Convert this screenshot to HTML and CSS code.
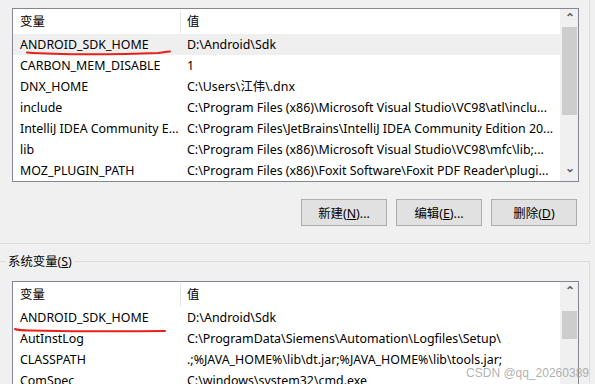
FILE: index.html
```html
<!DOCTYPE html>
<html lang="zh-CN">
<head>
    <meta charset="UTF-8">
    <title>环境变量</title>
    <link rel="stylesheet" href="styles.css">
</head>
<body>

    <!-- 用户变量 -->
    <div class="group group-user">
        <div class="listbox">
            <div class="list-body">
                <div class="list-head">
                    <div class="col-name">变量</div>
                    <div class="col-value">值</div>
                </div>
                <div class="row selected"><div class="col-name">ANDROID_SDK_HOME</div><div class="col-value">D:\Android\Sdk</div></div>
                <div class="row"><div class="col-name">CARBON_MEM_DISABLE</div><div class="col-value">1</div></div>
                <div class="row"><div class="col-name">DNX_HOME</div><div class="col-value">C:\Users\江伟\.dnx</div></div>
                <div class="row"><div class="col-name">include</div><div class="col-value">C:\Program Files (x86)\Microsoft Visual Studio\VC98\atl\inclu...</div></div>
                <div class="row"><div class="col-name">IntelliJ IDEA Community E...</div><div class="col-value">C:\Program Files\JetBrains\IntelliJ IDEA Community Edition 20...</div></div>
                <div class="row"><div class="col-name">lib</div><div class="col-value">C:\Program Files (x86)\Microsoft Visual Studio\VC98\mfc\lib;...</div></div>
                <div class="row"><div class="col-name">MOZ_PLUGIN_PATH</div><div class="col-value">C:\Program Files (x86)\Foxit Software\Foxit PDF Reader\plugi...</div></div>
            </div>
            <div class="scrollbar">
                <div class="arrow">&#8963;</div>
                <div class="track"><div class="thumb thumb-user"></div></div>
                <div class="arrow arrow-down">&#8964;</div>
            </div>
        </div>

        <div class="buttons">
            <button>新建(<u>N</u>)...</button>
            <button>编辑(<u>E</u>)...</button>
            <button>删除(<u>D</u>)</button>
        </div>
    </div>

    <!-- 系统变量 -->
    <div class="group group-system">
        <span class="group-label">系统变量(<u>S</u>)</span>
        <div class="listbox">
            <div class="list-body">
                <div class="list-head">
                    <div class="col-name">变量</div>
                    <div class="col-value">值</div>
                </div>
                <div class="row"><div class="col-name">ANDROID_SDK_HOME</div><div class="col-value">D:\Android\Sdk</div></div>
                <div class="row"><div class="col-name">AutInstLog</div><div class="col-value">C:\ProgramData\Siemens\Automation\Logfiles\Setup\</div></div>
                <div class="row"><div class="col-name">CLASSPATH</div><div class="col-value">.;%JAVA_HOME%\lib\dt.jar;%JAVA_HOME%\lib\tools.jar;</div></div>
                <div class="row"><div class="col-name">ComSpec</div><div class="col-value">C:\windows\system32\cmd.exe</div></div>
            </div>
            <div class="scrollbar">
                <div class="arrow">&#8963;</div>
                <div class="track"><div class="thumb thumb-system"></div></div>
            </div>
        </div>
    </div>

    <!-- 红色标记 -->
    <svg class="marks" width="595" height="384" viewBox="0 0 595 384">
        <path d="M27 52.5 C60 55, 120 54.5, 158 53 C163 52.5, 166 51.5, 170 51.5" />
        <path d="M15 329 C18 330.5, 22 330.5, 30 330.5 C80 331.5, 130 331.5, 165 331" />
    </svg>

    <div class="watermark">CSDN @qq_20260389</div>

</body>
</html>
```

FILE: styles.css
```css
body {
    margin: 0;
    width: 595px;
    height: 384px;
    overflow: hidden;
    position: relative;
    background: #f0f0f0;
    font-family: "Noto Sans", "Noto Sans CJK SC", sans-serif;
    font-size: 12.4px;
    color: #000;
}

.group {
    width: 590px;
    box-sizing: border-box;
    border-right: 1px solid #dcdcdc;
}

.group-user {
    padding: 8px 12px 17px 12px;
    border-bottom: 1px solid #dcdcdc;
}

.group-system {
    margin-top: 17px;
    border-top: 1px solid #dcdcdc;
    padding: 19px 12px 0 12px;
    position: relative;
    height: 121px;
}

.group-label {
    position: absolute;
    top: -9px;
    left: 6px;
    padding: 0 2px;
    background: #f0f0f0;
    line-height: 18px;
}

.listbox {
    display: flex;
    width: 565px;
    background: #fff;
    border: 1px solid #828790;
}

.group-user .listbox {
    height: 172px;
}

.group-system .listbox {
    height: 110px;
    border-bottom: none;
}

.list-body {
    flex: 1;
    overflow: hidden;
    border-right: 1px solid #f0f0f0;
}

.list-head {
    display: flex;
    height: 25px;
}

.list-head .col-name {
    border-right: 1px solid #e5e5e5;
    margin: 1px 0;
    line-height: 24px;
}

.list-head .col-value {
    margin: 1px 0;
    line-height: 24px;
}

.row {
    display: flex;
    height: 21px;
    line-height: 21px;
    white-space: nowrap;
}

.row.selected {
    background: #efefef;
}

.col-name {
    width: 168px;
    box-sizing: border-box;
    padding-left: 7px;
    overflow: hidden;
}

.col-value {
    flex: 1;
    padding-left: 6px;
    overflow: hidden;
}

.scrollbar {
    width: 17px;
    display: flex;
    flex-direction: column;
    background: #f0f0f0;
}

.arrow {
    height: 18px;
    line-height: 18px;
    text-align: center;
    font-size: 12px;
    color: #606060;
    font-weight: bold;
}

.arrow-down {
    line-height: 10px;
}

.track {
    flex: 1;
}

.thumb {
    margin: 0 1px;
    background: #cdcdcd;
}

.thumb-user {
    height: 88px;
}

.thumb-system {
    margin-top: 11px;
    height: 28px;
}

.buttons {
    display: flex;
    justify-content: flex-end;
    gap: 9px;
    margin-top: 17px;
}

.buttons button {
    width: 86px;
    height: 27px;
    background: #e1e1e1;
    border: 1px solid #adadad;
    font-family: inherit;
    font-size: 12.4px;
    color: #000;
    padding: 0;
}

.marks {
    position: absolute;
    left: 0;
    top: 0;
    pointer-events: none;
}

.marks path {
    fill: none;
    stroke: #e8201a;
    stroke-width: 2;
    stroke-linecap: round;
}

.watermark {
    position: absolute;
    right: 6px;
    bottom: 4px;
    font-family: "Liberation Sans", Arial, sans-serif;
    font-size: 12px;
    color: rgba(150, 150, 150, 0.75);
}
```
